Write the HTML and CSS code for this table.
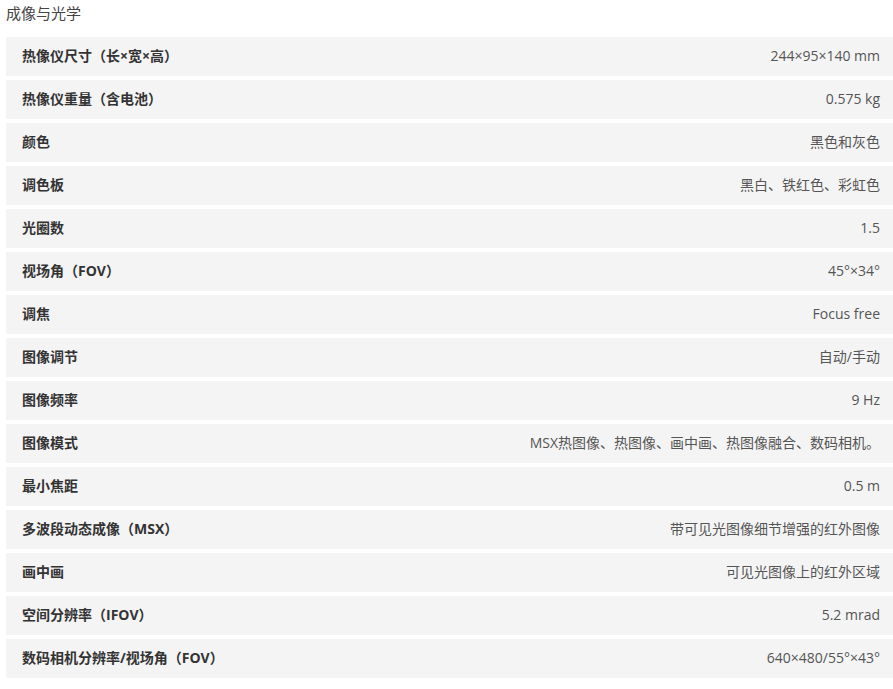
FILE: index.html
```html
<!DOCTYPE html>
<html lang="zh-CN">
<head>
    <meta charset="UTF-8">
    <meta name="viewport" content="width=device-width, initial-scale=1.0">
    <title>成像与光学</title>
    <link rel="stylesheet" href="styles.css">
</head>
<body>
    <div class="spec-section">
        <h3 class="spec-title">成像与光学</h3>
        <ul class="spec-list">
            <li class="spec-row"><span class="spec-name">热像仪尺寸（长×宽×高）</span><span class="spec-value">244×95×140 mm</span></li>
            <li class="spec-row"><span class="spec-name">热像仪重量（含电池）</span><span class="spec-value">0.575 kg</span></li>
            <li class="spec-row"><span class="spec-name">颜色</span><span class="spec-value">黑色和灰色</span></li>
            <li class="spec-row"><span class="spec-name">调色板</span><span class="spec-value">黑白、铁红色、彩虹色</span></li>
            <li class="spec-row"><span class="spec-name">光圈数</span><span class="spec-value">1.5</span></li>
            <li class="spec-row"><span class="spec-name">视场角（FOV）</span><span class="spec-value">45°×34°</span></li>
            <li class="spec-row"><span class="spec-name">调焦</span><span class="spec-value">Focus free</span></li>
            <li class="spec-row"><span class="spec-name">图像调节</span><span class="spec-value">自动/手动</span></li>
            <li class="spec-row"><span class="spec-name">图像频率</span><span class="spec-value">9 Hz</span></li>
            <li class="spec-row"><span class="spec-name">图像模式</span><span class="spec-value">MSX热图像、热图像、画中画、热图像融合、数码相机。</span></li>
            <li class="spec-row"><span class="spec-name">最小焦距</span><span class="spec-value">0.5 m</span></li>
            <li class="spec-row"><span class="spec-name">多波段动态成像（MSX）</span><span class="spec-value">带可见光图像细节增强的红外图像</span></li>
            <li class="spec-row"><span class="spec-name">画中画</span><span class="spec-value">可见光图像上的红外区域</span></li>
            <li class="spec-row"><span class="spec-name">空间分辨率（IFOV）</span><span class="spec-value">5.2 mrad</span></li>
            <li class="spec-row"><span class="spec-name">数码相机分辨率/视场角（FOV）</span><span class="spec-value">640×480/55°×43°</span></li>
        </ul>
    </div>
</body>
</html>
```

FILE: styles.css
```css
/* Global styles */
body {
    margin: 0;
    padding: 0;
    background-color: #ffffff;
    font-family: "Open Sans", "Noto Sans CJK SC", sans-serif;
    color: #333;
}

/* Section */
.spec-section {
    padding: 3px 0 0 6px;
}

.spec-title {
    margin: 0 0 13px 0;
    font-size: 15px;
    font-weight: normal;
    line-height: 21px;
    color: #444;
}

.spec-list {
    list-style: none;
    margin: 0;
    padding: 0;
    display: flex;
    flex-direction: column;
    gap: 4px;
}

.spec-row {
    display: flex;
    justify-content: space-between;
    align-items: center;
    height: 39px;
    padding: 0 13px 1px 16px;
    box-sizing: border-box;
    background-color: #f4f4f4;
    font-size: 14px;
    line-height: 20px;
}

.spec-name {
    font-weight: bold;
    color: #333;
}

.spec-value {
    color: #555;
}
```
